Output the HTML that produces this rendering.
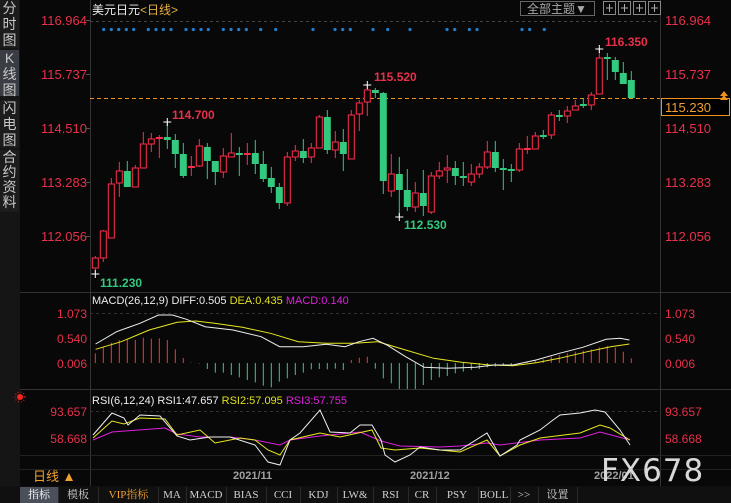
<!DOCTYPE html>
<html><head><meta charset="utf-8"><style>
html,body{margin:0;padding:0;background:#080808;width:731px;height:503px;overflow:hidden;font-family:"Liberation Sans","Noto Sans CJK SC",sans-serif}
#side{position:absolute;left:0;top:0;width:20px;height:487px;background:#151515}
.tab{position:absolute;left:0;width:19px;color:#c8c8c8;font-size:14px;line-height:16px;text-align:center;background:#1c1c1c}
.tb{position:absolute;top:487px;height:16px;line-height:16px;font-size:11px;color:#d0d0d0;text-align:center;border-right:1px solid #2a2a2a;font-family:"Liberation Serif","Noto Serif CJK SC",serif}
svg text{font-family:"Liberation Sans","Noto Sans CJK SC",sans-serif}
</style></head><body>
<div id="side">
<div class="tab" style="top:0;height:48px">分<br>时<br>图</div>
<div class="tab" style="top:50px;height:46px;background:#3a3d44">K<br>线<br>图</div>
<div class="tab" style="top:100px;height:48px">闪<br>电<br>图</div>
<div class="tab" style="top:150px;height:62px;line-height:15px">合<br>约<br>资<br>料</div>
</div>
<svg id="s" width="731" height="503" style="position:absolute;left:0;top:0"></svg>
<div style="position:absolute;left:0;top:486px;width:731px;height:17px;background:#101010"></div>
<div class="tb" style="left:20px;width:38px;background:#4a4f5a;color:#fff">指标</div>
<div class="tb" style="left:58px;width:40px">模板</div>
<div class="tb" style="left:99px;width:59px;color:#f0a030">VIP指标</div>
<div class="tb" style="left:158px;width:28px">MA</div>
<div class="tb" style="left:186px;width:40px">MACD</div>
<div class="tb" style="left:226px;width:40px">BIAS</div>
<div class="tb" style="left:266px;width:34px">CCI</div>
<div class="tb" style="left:300px;width:37px">KDJ</div>
<div class="tb" style="left:337px;width:36px">LW&amp;</div>
<div class="tb" style="left:373px;width:35px">RSI</div>
<div class="tb" style="left:408px;width:28px">CR</div>
<div class="tb" style="left:436px;width:42px">PSY</div>
<div class="tb" style="left:478px;width:32px">BOLL</div>
<div class="tb" style="left:510px;width:28px">&gt;&gt;</div>
<div class="tb" style="left:538px;width:39px">设置</div>
<div style="position:absolute;left:601px;top:453px;font-size:31px;color:#d8d8d8;letter-spacing:1px;font-family:'DejaVu Sans',sans-serif">FX678</div>
<script>
var s=document.getElementById('s'),h='';
function L(x1,y1,x2,y2,c,w,d){h+='<line x1="'+x1+'" y1="'+y1+'" x2="'+x2+'" y2="'+y2+'" stroke="'+c+'" stroke-width="'+(w||1)+'"'+(d?' stroke-dasharray="'+d+'"':'')+'/>';}
function T(x,y,t,c,sz,a,b){h+='<text x="'+x+'" y="'+y+'" fill="'+c+'" font-size="'+sz+'"'+(a?' text-anchor="'+a+'"':'')+(b?' font-weight="bold"':'')+'>'+t+'</text>';}
L(90.5,0,90.5,486,'#333');L(660.5,0,660.5,486,'#333');
L(20,292.5,731,292.5,'#333');L(20,389.5,731,389.5,'#333');L(20,455.5,731,455.5,'#222');L(20,469.5,731,469.5,'#222');
L(90,21.5,660,21.5,'#444',1,'3,3');L(90,313.5,660,313.5,'#333',1,'3,3');L(90,411.5,660,411.5,'#333',1,'3,3');
var R='#e8304a';
[['116.964',20],['115.737',74],['114.510',128],['113.283',182],['112.056',236]].forEach(function(a){T(87,a[1]+5,a[0],R,13,'end');T(665,a[1]+5,a[0],R,13);L(86,a[1]+.5,90,a[1]+.5,'#555')});
[['1.073',313],['0.540',338],['0.006',363]].forEach(function(a){T(87,a[1]+5,a[0],R,12,'end');T(665,a[1]+5,a[0],R,12)});
[['93.657',411],['58.668',438]].forEach(function(a){T(87,a[1]+5,a[0],R,12,'end');T(665,a[1]+5,a[0],R,12)});
h+='<text x="92" y="14" font-size="12"><tspan fill="#eee">美元日元</tspan><tspan fill="#e8b040">&lt;日线&gt;</tspan></text>';
h+='<rect x="520.5" y="1.5" width="74" height="14" fill="none" stroke="#666"/>';T(557,13,'全部主题▼','#aaa',12,'middle');
[603,618,633,648].forEach(function(x){h+='<rect x="'+(x+.5)+'" y="1.5" width="12" height="13" fill="none" stroke="#888"/>';L(x+3,8,x+10,8,'#aaa');L(x+6.5,4,x+6.5,12,'#aaa')});
[103.7,111.3,118.7,126.3,133.7,148.3,156,163.3,171,186,193.3,201,208.3,223.3,231,238.7,246.3,260.7,275.7,313,335,342.7,350.3,373,387.7,410,447,454.7,469.3,477,522,529.7,544.3].forEach(function(x){h+='<circle cx="'+x+'" cy="29.5" r="1.6" fill="#1e7fd0"/>'});
L(90,98.5,660,98.5,'#f0901e',1,'4,3');
h+='<rect x="661.5" y="98.5" width="68" height="17" fill="#000" stroke="#f0901e"/>';T(665,112,'115.230','#f0a030',13);
h+='<path d="M720 96 L724 91 L728 96Z M720 100 L724 95 L728 100Z" fill="#f0901e"/>';
var C=[[258,268,256,274,'r'],[231,258,230,262,'r'],[184,238,178,238,'r'],[171,183,162,197,'r'],[171,187,161,187,'g'],[168,187,165,187,'r'],[144,168,132,168,'r'],[139,144,133,152,'r'],[138,138,135,158,'rd'],[137,140,122,149,'g'],[140,154,134,168,'g'],[154,176,143,178,'g'],[167,167,156,176,'rd'],[146,166,139,167,'r'],[147,161,143,179,'g'],[161,172,161,185,'g'],[156,172,148,178,'r'],[153,157,133,157,'r'],[154,154,147,176,'gd'],[154,154,143,165,'rd'],[153,164,140,174,'g'],[164,179,151,182,'g'],[178,187,167,193,'g'],[187,203,183,209,'g'],[157,203,152,206,'r'],[151,157,145,161,'r'],[151,158,139,163,'g'],[148,157,143,163,'r'],[117,148,115,148,'r'],[117,150,110,154,'g'],[142,150,131,158,'r'],[142,154,129,171,'g'],[115,159,110,159,'r'],[103,114,100,131,'r'],[90,102,85,116,'r'],[90,93,88,98,'g'],[93,181,92,194,'g'],[174,191,154,197,'r'],[174,190,157,217,'g'],[190,207,169,211,'g'],[193,207,182,212,'r'],[193,206,170,216,'g'],[176,212,172,214,'r'],[171,176,162,179,'r'],[168,170,155,183,'r'],[168,176,161,185,'g'],[177,177,162,186,'gd'],[174,182,164,186,'r'],[167,174,163,178,'r'],[152,167,141,169,'r'],[152,168,141,172,'g'],[169,169,159,190,'gd'],[170,170,164,182,'gd'],[149,170,143,172,'r'],[149,149,136,154,'rd'],[136,149,132,149,'r'],[136,136,130,139,'gd'],[115,135,112,139,'r'],[116,116,110,121,'gd'],[111,116,106,123,'r'],[106,110,100,110,'r'],[105,105,98,108,'gd'],[95,105,92,110,'r'],[58,94,48,94,'r'],[58,58,53,80,'gd'],[60,72,57,80,'g'],[73,84,62,84,'g'],[80,98,71,98,'g']];
var G='#33c97e',RC='#ff2d4b';
C.forEach(function(c,i){var x=95.3+8*i,col=c[4][0]=='r'?RC:G;
 L(x,c[2],x,c[3],col);
 if(c[4].length==2){L(x-3.5,c[0],x+3.5,c[0],col,2)}
 else if(c[4]=='r'){h+='<rect x="'+(x-3)+'" y="'+c[0]+'" width="6" height="'+(c[1]-c[0])+'" fill="#080808" stroke="'+col+'" stroke-width="1"/>'}
 else h+='<rect x="'+(x-3.5)+'" y="'+c[0]+'" width="7" height="'+Math.max(2,c[1]-c[0])+'" fill="'+col+'"/>';
});
function X(x,y){L(x-4,y,x+4,y,'#fff');L(x,y-4,x,y+4,'#fff')}
X(95.3,274);X(167.3,122);X(367.3,85);X(399.3,217);X(599.3,49);
T(100,287,'111.230',G,12,0,1);T(172,119,'114.700',R,12,0,1);T(374,81,'115.520',R,12,0,1);T(404,229,'112.530',G,12,0,1);T(605,46,'116.350',R,12,0,1);
h+='<text x="92" y="304" font-size="11"><tspan fill="#eee">MACD(26,12,9) DIFF:0.505 </tspan><tspan fill="#e0e020">DEA:0.435 </tspan><tspan fill="#e020e0">MACD:0.140</tspan></text>';
var M=[190,170,158,150,147,150,143,146,145,150,178,204,218,220,237,248,248,255,262,270,277,287,292,275,265,255,248,238,237,238,236,240,210,203,200,236,265,280,297,297,297,285,270,262,258,250,245,240,237,232,230,226,224,222,215,212,208,200,195,190,185,182,178,172,168,173,185,205];
M.forEach(function(z,i){var x=95.3+8*i,y=290+z/3;L(x,363,x,y,y<363?'#ff3040':'#3cc88a')});
function P(pts,c,sx){var d='';for(var i=0;i<pts.length;i+=2){var x=sx?pts[i]/2.145:pts[i],y=sx?290+pts[i+1]/3:pts[i+1];d+=(i?'L':'M')+x.toFixed(1)+' '+y.toFixed(1)}h+='<path d="'+d+'" fill="none" stroke="'+c+'" stroke-width="1"/>'}
P([205,178,260,155,320,120,380,97,420,93,460,100,520,112,580,130,640,155,700,160,760,160,810,155,870,180,930,205,990,217,1050,225,1100,227,1150,218,1200,205,1260,185,1310,170,1350,162],'#e8e820',1);
P([205,162,250,125,300,100,340,75,370,75,400,88,440,110,500,120,560,140,600,170,650,170,700,163,740,170,770,155,800,145,830,165,870,200,910,232,960,235,1020,232,1060,225,1100,225,1150,210,1200,190,1250,172,1300,148,1330,145,1350,150],'#f0f0f0',1);
h+='<circle cx="20" cy="397" r="3" fill="#ff2020"/><circle cx="20" cy="397" r="5" fill="none" stroke="#ff2020" stroke-dasharray="1,2"/>';
h+='<text x="92" y="404" font-size="11"><tspan fill="#eee">RSI(6,12,24) RSI1:47.657 </tspan><tspan fill="#e0e020">RSI2:57.095 </tspan><tspan fill="#e020e0">RSI3:57.755</tspan></text>';
P([93,440,112,432,165,428,177,434,200,437,230,437,255,440,280,445,290,440,320,436,360,432,381,441,400,446,440,447,460,446,487,443,500,445,540,440,580,438,600,432,630,440],'#e020e0');
P([93,438,112,421,124,424,140,418,165,419,177,435,200,430,215,443,240,438,255,440,268,450,280,455,290,440,320,433,340,437,372,430,381,448,395,450,420,448,460,452,487,440,500,456,520,445,540,438,580,433,600,425,610,428,630,440],'#e8e820');
P([93,435,112,413,124,418,128,425,140,415,160,416,177,436,190,440,210,437,230,437,255,445,268,462,280,465,290,440,300,433,320,410,330,432,350,433,360,425,372,425,381,440,385,455,395,462,410,455,420,447,440,450,460,450,487,433,500,456,517,445,520,440,540,430,553,420,560,415,580,413,595,410,605,412,620,430,630,445],'#f0f0f0');
T(233,479,'2021/11','#a0a0a0',11,0,1);T(410,479,'2021/12','#a0a0a0',11,0,1);T(594,479,'2022/01','#a0a0a0',11,0,1);
T(33,481,'日线','#f0a030',13);h+='<path d="M65 481 L69 473 L73 481Z" fill="#f0a030"/>';
s.innerHTML=h;
</script>
</body></html>
